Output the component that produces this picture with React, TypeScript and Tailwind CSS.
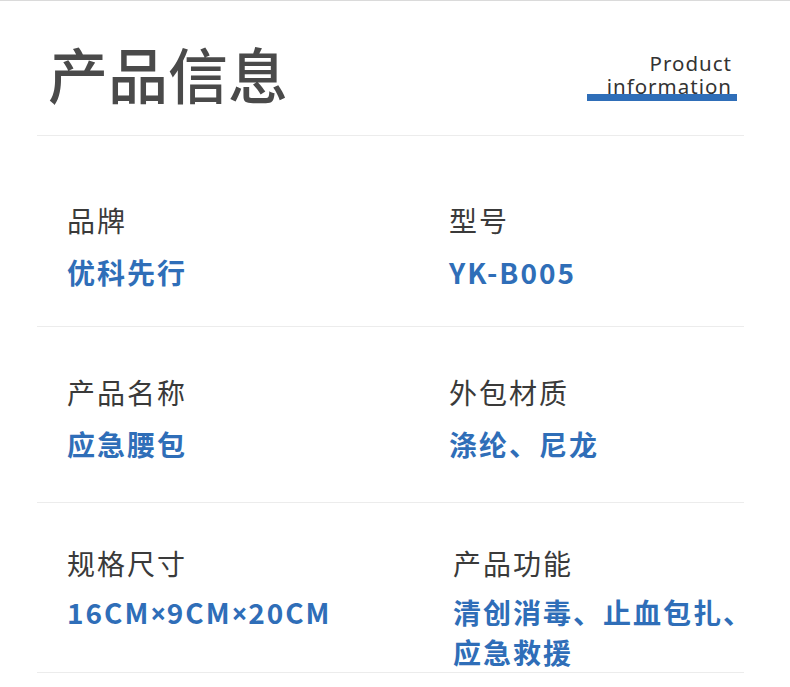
const specs = [
  {
    pad: "pt-[66px] pb-[34px]",
    gap: "mt-[14px]",
    items: [
      { label: "品牌", lines: [["优科先行"]] },
      { label: "型号", lines: [["YK-B005"]] },
    ],
    rightInset: "pl-0",
  },
  {
    pad: "pt-[47px] pb-[38px]",
    gap: "mt-[14px]",
    items: [
      { label: "产品名称", lines: [["应急腰包"]] },
      { label: "外包材质", lines: [["涤纶、尼龙"]] },
    ],
    rightInset: "pl-0",
  },
  {
    pad: "pt-[42px] pb-0",
    gap: "mt-[11px]",
    items: [
      { label: "规格尺寸", lines: [["16CM", "×", "9CM", "×", "20CM"]] },
      { label: "产品功能", lines: [["清创消毒、止血包扎、"], ["应急救援"]] },
    ],
    rightInset: "pl-[4px]",
  },
];

function SpecCell({ label, lines, gap }: { label: string; lines: string[][]; gap: string }) {
  return (
    <div className="flex flex-col">
      <p className="text-[28px] leading-[36px] tracking-[2px] text-[#3a3a3a]">{label}</p>
      <div className={`${gap} flex flex-col`}>
        {lines.map((parts, li) => (
          <p
            key={li}
            className="text-[28px] leading-[40px] font-bold tracking-[2px] whitespace-nowrap text-[#2f6eb8]"
          >
            {parts.map((part, i) =>
              part === "×" ? (
                <span key={i} className="font-['Noto_Sans',sans-serif] tracking-[0.5px]">
                  ×
                </span>
              ) : (
                <span key={i}>{part}</span>
              )
            )}
          </p>
        ))}
      </div>
    </div>
  );
}

export default function App() {
  return (
    <div className="h-[687px] w-[790px] overflow-hidden border-t border-[#dadada] bg-white font-['Noto_Sans_CJK_SC','Noto_Sans',sans-serif]">
      <div className="mr-[46px] ml-[37px] flex items-start justify-between border-b border-[#ececec] pt-[36px] pb-[26px]">
        <h1 className="ml-[11px] text-[60px] leading-[72px] font-medium text-[#4a4a4a]">
          产品信息
        </h1>
        <div className="relative mt-[15px] mr-[7px] w-[150px]">
          <div className="absolute right-0 bottom-[-3px] h-[7px] w-[150px] bg-[#2f6eb8]" />
          <p className="relative pr-[5px] text-right font-['Noto_Sans',sans-serif] text-[20.5px] leading-[23px] tracking-[1px] text-[#333]">
            Product
            <br />
            information
          </p>
        </div>
      </div>

      {specs.map((row, i) => (
        <div
          key={i}
          className={`mr-[46px] ml-[37px] grid grid-cols-[412px_1fr] border-b border-[#ececec] ${row.pad}`}
        >
          <div className="pl-[30px]">
            <SpecCell {...row.items[0]} gap={row.gap} />
          </div>
          <div className={row.rightInset}>
            <SpecCell {...row.items[1]} gap={row.gap} />
          </div>
        </div>
      ))}
    </div>
  );
}
